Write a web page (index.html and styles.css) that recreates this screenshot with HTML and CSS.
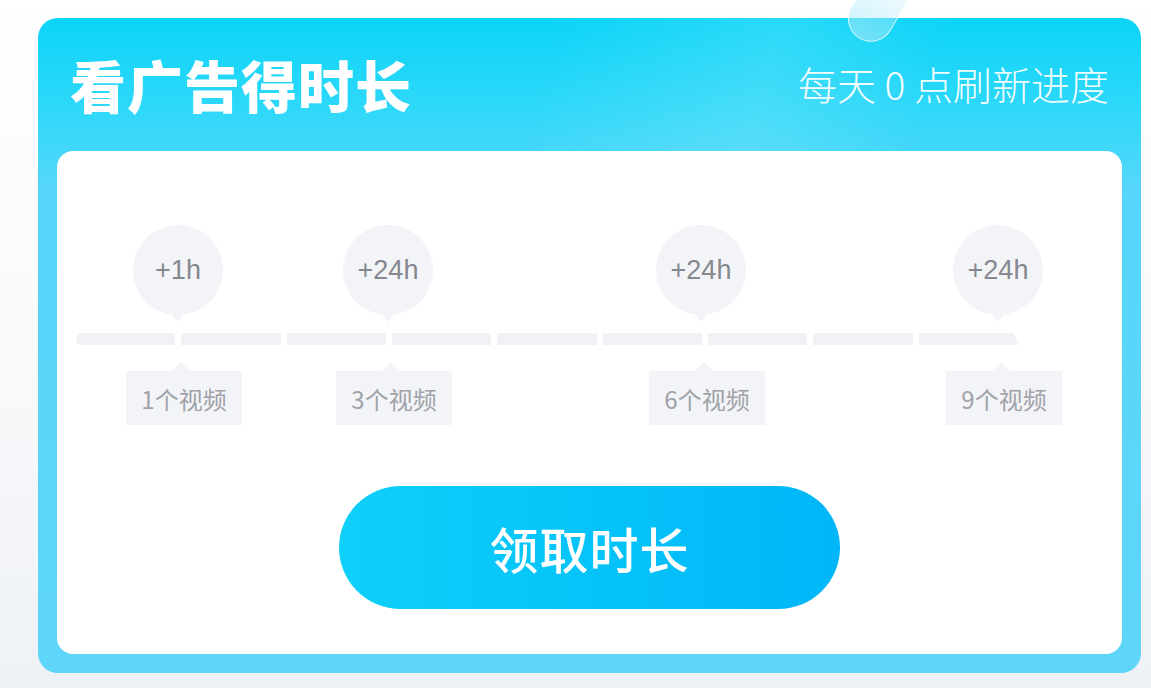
FILE: index.html
```html
<!DOCTYPE html>
<html lang="zh-CN">
<head>
    <meta charset="UTF-8">
    <meta name="viewport" content="width=device-width, initial-scale=1.0">
    <title>看广告得时长</title>
    <link rel="stylesheet" href="styles.css">
</head>
<body>
    <div class="deco"></div>

    <div class="card">
        <!-- 标题 -->
        <div class="card-head">
            <h1>看广告得时长</h1>
            <span class="tip">每天 0 点刷新进度</span>
        </div>

        <div class="panel">
            <!-- 进度 -->
            <div class="timeline">
                <div class="track">
                    <span class="seg"></span><span class="seg"></span><span class="seg"></span>
                    <span class="seg"></span><span class="seg"></span><span class="seg"></span>
                    <span class="seg"></span><span class="seg"></span><span class="seg last"></span>
                </div>

                <div class="mark" style="left: 102px;">
                    <div class="bubble">+1h</div>
                    <div class="label">1个视频</div>
                </div>
                <div class="mark" style="left: 312px;">
                    <div class="bubble">+24h</div>
                    <div class="label">3个视频</div>
                </div>
                <div class="mark" style="left: 625px;">
                    <div class="bubble">+24h</div>
                    <div class="label">6个视频</div>
                </div>
                <div class="mark" style="left: 922px;">
                    <div class="bubble">+24h</div>
                    <div class="label">9个视频</div>
                </div>
            </div>

            <button class="claim">领取时长</button>
        </div>
    </div>
</body>
</html>
```

FILE: styles.css
```css
body {
    margin: 0;
    min-height: 688px;
    background: linear-gradient(180deg, #ffffff 0%, #f7f8fa 60%, #eef1f5 100%);
    font-family: "Noto Sans CJK SC", "Noto Sans", sans-serif;
    padding: 18px 10px 0 38px;
    box-sizing: border-box;
    overflow: hidden;
}
/* 顶部装饰 */
.deco {
    position: absolute;
    left: 856px;
    top: -34px;
    width: 44px;
    height: 76px;
    border-radius: 0 0 24px 24px;
    transform: rotate(30deg);
    background: linear-gradient(180deg, rgba(220, 245, 255, 0.15), rgba(170, 232, 250, 0.6));
    border: 1px solid rgba(255, 255, 255, 0.7);
    z-index: 2;
}
.card {
    width: 1103px;
    height: 655px;
    box-sizing: border-box;
    border-radius: 20px;
    padding: 0 19px 19px;
    display: flex;
    flex-direction: column;
    background:
        linear-gradient(105deg, rgba(255, 255, 255, 0) 45%, rgba(255, 255, 255, 0.12) 65%, rgba(255, 255, 255, 0) 80%) top / 100% 160px no-repeat,
        linear-gradient(180deg, #0bd4f7 0%, #2fd8f9 14%, #55d6fa 26%, #60d5fa 100%);
}
.card-head {
    height: 133px;
    display: flex;
    align-items: center;
    justify-content: space-between;
    padding: 0 13px 0 13px;
}
.card-head h1 {
    margin: 0;
    color: #fff;
    font-size: 56px;
    font-weight: 900;
    letter-spacing: 1px;
    margin-top: -2px;
}
.tip {
    color: rgba(255, 255, 255, 0.95);
    font-size: 39px;
    font-weight: 300;
    margin-top: -4px;
}
.panel {
    flex: 1;
    background: #fff;
    border-radius: 16px;
    display: flex;
    flex-direction: column;
    align-items: center;
}
.timeline {
    position: relative;
    align-self: flex-start;
    margin: 182px 0 0 19px;
    width: 942px;
}
.track {
    display: flex;
    gap: 6px;
}
.seg {
    flex: 1;
    height: 12px;
    background: #f1f2f5;
}
.seg:first-child {
    border-radius: 6px 0 0 6px;
}
.seg.last {
    clip-path: polygon(0 0, 96% 0, 100% 100%, 0 100%);
}
.mark {
    position: absolute;
    top: 0;
    width: 0;
}
.bubble {
    position: absolute;
    left: -45px;
    top: -108px;
    width: 90px;
    height: 90px;
    border-radius: 50%;
    background: #f3f4f7;
    color: #85888f;
    font-family: "Liberation Sans", Arial, sans-serif;
    font-size: 27px;
    display: flex;
    align-items: center;
    justify-content: center;
}
.bubble::after {
    content: "";
    position: absolute;
    left: 39px;
    bottom: -7px;
    border: 6px solid transparent;
    border-top: 7px solid #f3f4f7;
    border-bottom: 0;
}
.label {
    position: absolute;
    left: -52px;
    top: 38px;
    width: 116px;
    height: 54px;
    background: #f3f4f7;
    color: #9fa2a9;
    font-size: 24px;
    display: flex;
    align-items: center;
    justify-content: center;
    white-space: nowrap;
}
.label::before {
    content: "";
    position: absolute;
    left: 46px;
    top: -9px;
    border: 9px solid transparent;
    border-bottom: 9px solid #f3f4f7;
    border-top: 0;
}
.claim {
    margin-top: 141px;
    width: 501px;
    height: 123px;
    border: none;
    border-radius: 62px;
    background: linear-gradient(90deg, #0fd0f9 0%, #06c3f9 50%, #00b6f8 100%);
    color: #fff;
    font-family: "Noto Sans CJK SC", sans-serif;
    font-size: 49px;
    font-weight: 500;
    letter-spacing: 1px;
}
```
